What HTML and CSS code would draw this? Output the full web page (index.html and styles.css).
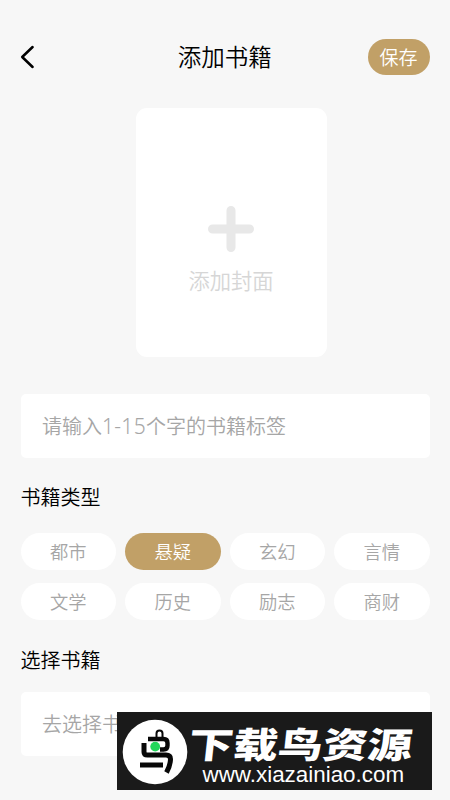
FILE: index.html
```html
<!DOCTYPE html>
<html lang="zh-CN">
<head>
<meta charset="utf-8">
<title>添加书籍</title>
<link rel="stylesheet" href="styles.css">
</head>
<body>
<header class="bar">
  <svg class="back" width="16" height="24" viewBox="0 0 16 24"><path d="M12.600 2 2.200 12 12.600 22" fill="none" stroke="#000" stroke-width="2.500" stroke-linecap="round" stroke-linejoin="round"/></svg>
  <h1 class="title">添加书籍</h1>
  <button class="save">保存</button>
</header>
<main>
  <div class="cover">
    <svg class="plus" width="46" height="46" viewBox="0 0 46 46"><path d="M23 4.500v37M4.500 23h37" stroke="#e8e8e8" stroke-width="9" stroke-linecap="round"/></svg>
    <span class="cover-label">添加封面</span>
  </div>
  <div class="field"><span>请输入<span class="digits">1-15</span>个字的书籍标签</span></div>
  <h2 class="heading">书籍类型</h2>
  <div class="chips">
    <span class="chip">都市</span>
    <span class="chip active">悬疑</span>
    <span class="chip">玄幻</span>
    <span class="chip">言情</span>
    <span class="chip">文学</span>
    <span class="chip">历史</span>
    <span class="chip">励志</span>
    <span class="chip">商财</span>
  </div>
  <h2 class="heading second">选择书籍</h2>
  <div class="field">去选择书籍</div>
</main>
<div class="watermark">
  <svg class="bird" width="66" height="66" viewBox="0 0 66 66">
    <circle cx="33" cy="33" r="32.300" fill="#fff"/>
    <g fill="none" stroke="#080808">
      <path d="M34.500 18v-3.500a3 3 0 0 1 6 0V18" stroke-width="2"/>
      <path d="M26 20H41.500q4 0 4 4V26.500q0 4-4 4H38" stroke-width="4.400"/>
      <path d="M22 24v9q0 3 3.500 3H44q4.500 0 4.500 4Q48.500 46 44.500 53.500" stroke-width="5"/>
      <path d="M18 46H41" stroke-width="5"/>
    </g>
    <circle cx="33.200" cy="27.600" r="4.900" fill="#22d65a"/>
  </svg>
  <div class="brand">
    <div class="brand-name">下载鸟资源</div>
    <div class="brand-url">www.xiazainiao.com</div>
  </div>
</div>
</body>
</html>
```
FILE: styles.css
```css
* { box-sizing: border-box; }
body {
  margin: 0;
  height: 800px;
  overflow: hidden;
  position: relative;
  background: #f7f7f7;
  color: #000;
  font-family: "Noto Sans CJK SC", sans-serif;
  font-weight: 350;
}
.bar {
  height: 108px;
  padding: 39px 20.5px 0 20px;
  display: grid;
  grid-template-columns: 62px 1fr 62px;
  align-items: start;
}
.back { margin-top: 6px; }
.title {
  margin: -1px 0 0;
  font-size: 23.5px;
  line-height: 36px;
  font-weight: 350;
  text-align: center;
}
.save {
  height: 36px;
  padding: 0;
  border: 0;
  border-radius: 18px;
  background: #c1a067;
  color: #fff;
  font: inherit;
  font-size: 19px;
  line-height: 36px;
}
main { padding: 0 20.5px; }
.cover {
  width: 191px;
  height: 249px;
  margin: 0 auto 37px 115px;
  padding-top: 98px;
  border-radius: 11px;
  background: #fff;
  display: flex;
  flex-direction: column;
  align-items: center;
}
.cover-label {
  margin-top: 12px;
  font-size: 21.3px;
  line-height: 32px;
  font-weight: 350;
  color: #d6d6d6;
}
.field {
  height: 64px;
  padding-left: 21.5px;
  border-radius: 5px;
  background: #fff;
  color: #a6a6a6;
  font-size: 20px;
  line-height: 64px;
}
.digits {
  font-family: "Noto Sans", sans-serif;
  font-weight: 300;
  font-size: 21px;
  line-height: 1;
  letter-spacing: 0.3px;
}
.heading {
  margin: 24px 0 0;
  font-size: 20px;
  line-height: 30px;
  font-weight: 350;
}
.chips {
  margin-top: 21px;
  display: grid;
  grid-template-columns: repeat(4, 1fr);
  gap: 13px 9px;
}
.chip {
  height: 37px;
  border-radius: 18.5px;
  background: #fff;
  color: #a6a6a6;
  font-size: 18.3px;
  line-height: 37px;
  text-align: center;
}
.chip.active { background: #c1a067; color: #fff; }
.second { margin-top: 25px; margin-bottom: 17px; }
.watermark {
  position: absolute;
  left: 117px;
  top: 712px;
  width: 315px;
  height: 78px;
  padding: 7px 0 0 4.5px;
  display: flex;
  background: #1a1a1a;
  color: #fff;
}
.bird { flex: none; }
.brand { width: 230px; white-space: nowrap; }
.brand-name {
  width: 178px;
  margin: 4px 0 0 1px;
  font-size: 35.5px;
  line-height: 40px;
  font-weight: 900;
  transform: scaleX(1.26) skewX(-5deg);
  transform-origin: 0 50%;
}
.brand-url {
  margin: 1px 0 0 15px;
  font-family: "Liberation Sans", sans-serif;
  font-size: 22.4px;
  line-height: 22px;
  font-weight: 400;
}
```
